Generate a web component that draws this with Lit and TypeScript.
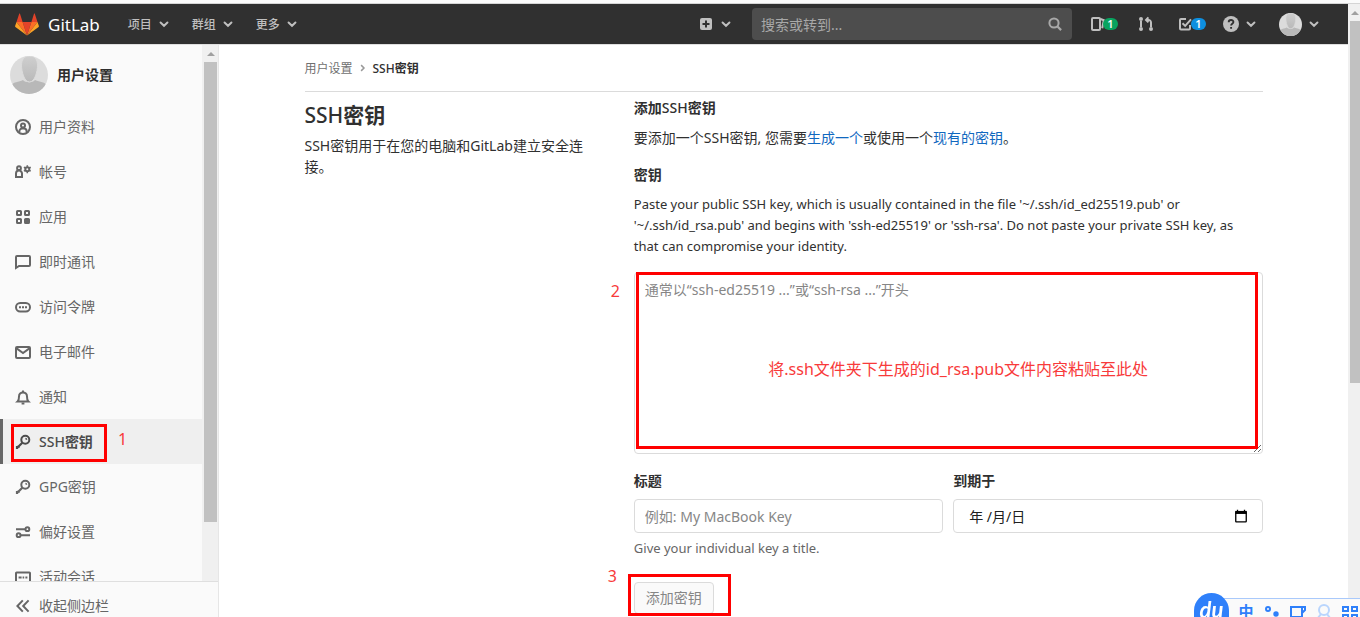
import { LitElement, html, css, svg, nothing } from "lit";
import { customElement, property, state } from "lit/decorators.js";
import { classMap } from "lit/directives/class-map.js";

const ICONS: Record<string, unknown> = {
  profile: svg`<circle cx="8" cy="8" r="7"/><circle cx="8" cy="6.6" r="2"/><path d="M4.4 13v-.8A2.6 2.6 0 0 1 7 9.6h2a2.6 2.6 0 0 1 2.6 2.6v.8"/>`,
  account: svg`<circle cx="4" cy="4.2" r="1.9"/><path d="M1 13V9.6a3 3 0 0 1 6 0V13z"/><circle cx="12.3" cy="5.2" r="2"/><path d="M12.3 1.2v1.6M12.3 7.6v1.6M8.9 3.2l1.4.8M14.3 6.4l1.4.8M8.9 7.2l1.4-.8M14.3 4l1.4-.8" stroke-width="1.5"/>`,
  apps: svg`<rect x="2" y="2" width="4" height="4" rx=".6"/><rect x="10" y="2" width="4" height="4" rx=".6"/><rect x="2" y="10" width="4" height="4" rx=".6"/><rect x="10" y="10" width="4" height="4" rx=".6" fill="currentColor"/>`,
  chat: svg`<path d="M1 14V3a1 1 0 0 1 1-1h12a1 1 0 0 1 1 1v8a1 1 0 0 1-1 1H4z"/>`,
  token: svg`<rect x="1" y="4" width="14" height="8.4" rx="4.2"/><path d="M4 8.2h2M7 8.2h2M10 8.2h2"/>`,
  mail: svg`<rect x="1" y="3" width="14" height="11" rx="1"/><path d="M1.6 4.4 8 9l6.4-4.6"/>`,
  bell: svg`<path d="M2.6 12.6c1.3-1.2 1.4-2.5 1.4-5.2a4 4 0 0 1 8 0c0 2.7.1 4 1.4 5.2z"/><path d="M8 1.4v2M6.6 14.4h2.8"/>`,
  key: svg`<circle cx="10.3" cy="5.7" r="4"/><path d="M7.3 8.7 2.3 13.7M2 12v3M3.7 11.3v2.5" stroke-width="2.2"/><path d="M10.4 4.5a1.3 1.3 0 0 1 1.2 1.2" stroke-width="1.5"/>`,
  prefs: svg`<path d="M1 5.2h9M6 11.2h9"/><circle cx="12.4" cy="5.2" r="1.9"/><circle cx="3.6" cy="11.2" r="1.9"/>`,
  session: svg`<rect x="1" y="3.4" width="14" height="10" rx=".6"/><path d="M3.6 8.4h3M7.6 8.4h1.6M10.4 8.4h2"/>`,
  collapse: svg`<path d="M7.8 2.4 2.4 8l5.4 5.6M13.6 2.4 8.2 8l5.4 5.6"/>`,
  chevron: svg`<path d="M3.4 6l4.6 4.4L12.600 6" stroke-width="2.600" stroke-linecap="round"/>`,
  angle: svg`<path d="M5.500 4.200 9.300 8l-3.800 3.800"/>`,
  plus: svg`<rect x="2" y="2" width="12" height="12" rx="2" fill="currentColor" stroke="none"/><path d="M8 4.5v7M4.5 8h7" stroke="#303030"/>`,
  search: svg`<circle cx="7" cy="7" r="4.6"/><path d="M10.5 10.5l3.6 3.6" stroke-width="2.2"/>`,
  issues: svg`<rect x="3" y="2" width="8" height="12" rx="1"/><path d="M11.500 3l3.300 1.200-1.600 8"/>`,
  merge: svg`<path d="M3 5v6M13 11V6.5a2.6 2.6 0 0 0-2.600-2.600H8.600M10.400 1.400 8 3.900l2.400 2.500"/><circle cx="3" cy="3" r="1" fill="currentColor"/><circle cx="3" cy="13" r="1" fill="currentColor"/><circle cx="13" cy="13" r="1" fill="currentColor"/>`,
  todo: svg`<path d="M9 3H4a1 1 0 0 0-1 1v8.500a1 1 0 0 0 1 1h8a1 1 0 0 0 1-1V9"/><path d="M5.500 7.200l2.700 2.700L14 3.400"/>`,
  help: svg`<circle cx="8" cy="8" r="8" fill="currentColor" stroke="none"/><path d="M5.7 6.300c0-3 4.700-2.900 4.700-.2 0 1.700-2.300 1.600-2.300 3.300M8.100 11v1.700" stroke="#303030" stroke-width="1.900"/>`,
  calendar: svg`<path d="M2 4.5h12V14a.7.7 0 0 1-.7.7H2.700A.7.7 0 0 1 2 14z" stroke-width="1.500"/><path d="M1.300 2.200h13.400v3.400H1.300z" fill="currentColor" stroke="none"/><path d="M4 .8v2M12 .8v2" stroke-width="1.500"/>`,
};

@customElement("gl-icon")
class GlIcon extends LitElement {
  @property() name = "";
  @property({ type: Number }) size = 16;
  static styles = css`
    :host { display: inline-flex; flex: none; }
    svg { display: block; fill: none; stroke: currentColor; stroke-width: 2; }
  `;
  render() {
    return html`<svg width=${this.size} height=${this.size} viewBox="0 0 16 16" aria-hidden="true">${ICONS[this.name]}</svg>`;
  }
}

@customElement("gl-avatar")
class GlAvatar extends LitElement {
  @property({ type: Number }) size = 38;
  static styles = css`
    :host { display: inline-flex; flex: none; border-radius: 50%; overflow: hidden; }
    svg { display: block; }
  `;
  render() {
    return html`<svg width=${this.size} height=${this.size} viewBox="0 0 38 38" aria-hidden="true">
      <defs>
        <linearGradient id="h" x1="0" y1="0" x2="0" y2="1"><stop offset="0" stop-color="#cfcfcf"/><stop offset="1" stop-color="#b9b9b9"/></linearGradient>
      </defs>
      <rect width="38" height="38" fill="#dcdcdc"/>
      <path d="M0 38v-8c3-4 9-4 13-6 2 3 10 3 12 0 5 2 10 2 13 6v8z" fill="#b8b8b8"/>
      <path d="M19.500 0c6 0 8 4 8 9.500S25 26 19.500 26 11.500 15 11.500 9.500 13.500 0 19.500 0z" fill="url(#h)" stroke="#dcdcdc" stroke-width="1"/>
    </svg>`;
  }
}

@customElement("gl-scrollbar")
class GlScrollbar extends LitElement {
  static styles = css`
    :host { display: flex; flex-direction: column; background: #f0f0f0; box-sizing: border-box; }
    .arrow { height: 17px; display: grid; place-items: center; }
    .arrow svg { display: block; }
    .thumb { background: #c1c1c1; height: var(--thumb, 50%); }
  `;
  render() {
    return html`<div class="arrow"><svg width="8" height="4" viewBox="0 0 8 4"><path d="M0 4l4-4 4 4z" fill="#a0a0a0"/></svg></div><div class="thumb"></div>`;
  }
}

@customElement("gl-header")
class GlHeader extends LitElement {
  static styles = css`
    :host { display: flex; align-items: center; height: 41px; flex: none; background: #303030; color: #bfbfbf; padding: 0 28px 0 15px; border-bottom: 1px solid #dfdfdf; font-size: 12px; box-sizing: border-box; }
    a, button { color: inherit; text-decoration: none; background: none; border: 0; padding: 0; font: inherit; display: flex; align-items: center; }
    .brand { color: #fff; font-size: 17px; gap: 9px; margin-right: 28px; }
    .brand svg { display: block; }
    .menu, .new, .help, .user { gap: 6px; }
    .menu { font-weight: 500; margin-right: 22px; }
    .spacer { flex: 1; }
    .new { margin-right: 20px; }
    .search { display: flex; align-items: center; width: 320px; height: 32px; box-sizing: border-box; border-radius: 4px; background: #4d4d4d; padding: 0 9px; margin-right: 17px; color: #a8a8a8; }
    .search input { flex: 1; min-width: 0; border: 0; padding: 0; background: none; outline: 0; color: #fff; font: inherit; font-size: 14px; }
    .search input::placeholder { color: #a8a8a8; opacity: 1; }
    .count { position: relative; margin-right: 33px; }
    .badge { position: absolute; left: 14px; top: 2px; width: 15px; height: 12px; border-radius: 6px; text-align: center; color: #fff; font-size: 11px; line-height: 12px; font-weight: 600; }
    .green { background: #08a35f; }
    .blue { background: #0d8fe0; }
    .merge { margin-right: 23px; }
    .todo { margin-right: 30px; }
    .help { margin-right: 22px; }
  `;
  render() {
    return html`
      <a class="brand" href="#">
        <svg width="24" height="23" viewBox="0 0 24 23" aria-hidden="true">
          <path d="M12 22.5 16.4 9H7.6z" fill="#e24329"/>
          <path d="M12 22.5 7.6 9H1.5zM12 22.5 16.4 9h6.1z" fill="#fc6d26"/>
          <path d="M1.500 9 .1 13c-.1.4 0 .8.3 1L12 22.500zM22.500 9l1.400 4c.1.4 0 .8-.3 1L12 22.500z" fill="#fca326"/>
          <path d="M1.500 9h6.100L5 .8c-.1-.4-.7-.4-.8 0zM22.500 9h-6.100L19 .8c.1-.4.7-.4.8 0z" fill="#e24329"/>
        </svg>
        GitLab
      </a>
      ${["项目", "群组", "更多"].map((t) => html`<button class="menu">${t}<gl-icon name="chevron" size="12"></gl-icon></button>`)}
      <div class="spacer"></div>
      <button class="new" aria-label="新建"><gl-icon name="plus" size="16"></gl-icon><gl-icon name="chevron" size="12"></gl-icon></button>
      <label class="search"><input type="text" aria-label="搜索或转到" placeholder="搜索或转到..." /><gl-icon name="search"></gl-icon></label>
      <a class="count" href="#" aria-label="议题"><gl-icon name="issues"></gl-icon><span class="badge green">1</span></a>
      <a class="merge" href="#" aria-label="合并请求"><gl-icon name="merge"></gl-icon></a>
      <a class="count todo" href="#" aria-label="待办事项"><gl-icon name="todo"></gl-icon><span class="badge blue">1</span></a>
      <button class="help" aria-label="帮助"><gl-icon name="help"></gl-icon><gl-icon name="chevron" size="12"></gl-icon></button>
      <button class="user" aria-label="用户"><gl-avatar size="23"></gl-avatar><gl-icon name="chevron" size="12"></gl-icon></button>
    `;
  }
}

const NAV = [
  ["profile", "", "用户资料"],
  ["account", "", "帐号"],
  ["apps", "", "应用"],
  ["chat", "", "即时通讯"],
  ["token", "", "访问令牌"],
  ["mail", "", "电子邮件"],
  ["bell", "", "通知"],
  ["key", "SSH", "密钥"],
  ["key", "", "GPG密钥"],
  ["prefs", "", "偏好设置"],
  ["session", "", "活动会话"],
];

@customElement("gl-sidebar")
class GlSidebar extends LitElement {
  static styles = css`
    :host { display: flex; flex-direction: column; width: 219px; flex: none; background: #fafafa; border-right: 1px solid #e6e6e6; box-sizing: border-box; color: #666; font-size: 14px; min-height: 0; }
    .scroll { flex: 1; min-height: 0; display: flex; }
    .list { flex: 1; min-width: 0; overflow: hidden; }
    gl-scrollbar { width: 16px; padding: 0 1px 0 2px; --thumb: 460px; }
    .title { display: flex; align-items: center; gap: 9px; height: 59px; padding-left: 10px; color: #2e2e2e; font-weight: 600; }
    .list a { display: flex; align-items: center; gap: 8px; height: 45px; padding-left: 15px; color: inherit; text-decoration: none; }
    .list a.active { position: relative; background: #efefef; box-shadow: inset 3px 0 0 #666; color: #4b4b4b; font-weight: 600; }
    .text { padding-bottom: 2px; }
    .latin { font-weight: 500; }
    .mark { position: absolute; left: 11px; top: 5px; width: 96px; height: 38px; box-sizing: border-box; border: 3px solid #f00; }
    .num { position: absolute; left: 118px; top: 8px; color: #f83a3a; font-size: 16px; font-weight: 400; line-height: 24px; }
    .collapse { display: flex; align-items: center; gap: 8px; height: 36px; padding: 12px 0 0 15px; box-sizing: border-box; border: 0; border-top: 1px solid #dfdfdf; background: none; color: inherit; font: inherit; }
  `;
  render() {
    return html`
      <div class="scroll">
        <nav class="list">
          <div class="title"><gl-avatar size="38"></gl-avatar><span class="text">用户设置</span></div>
          ${NAV.map(([icon, latin, text], i) => {
            const active = i === 7;
            return html`<a href="#" class=${classMap({ active })}>
              <gl-icon name=${icon}></gl-icon><span class="text">${latin ? html`<span class="latin">${latin}</span>` : nothing}${text}</span>
              ${active ? html`<span class="mark"></span><span class="num">1</span>` : nothing}
            </a>`;
          })}
        </nav>
        <gl-scrollbar></gl-scrollbar>
      </div>
      <button class="collapse"><gl-icon name="collapse"></gl-icon><span class="text">收起侧边栏</span></button>
    `;
  }
}

@customElement("ssh-key-page")
class SshKeyPage extends LitElement {
  @state() key = "";
  static styles = css`
    :host { display: block; flex: 1; min-width: 0; color: #303030; font-size: 14px; line-height: 21px; }
    .container { max-width: 990px; margin: 0 auto; padding: 0 16px; box-sizing: border-box; }
    .crumbs { display: flex; align-items: center; gap: 4px; height: 47px; border-bottom: 1px solid #dbdbdb; box-sizing: border-box; font-size: 12px; color: #303030; font-weight: 600; }
    .crumbs a { color: #707070; text-decoration: none; font-weight: 400; }
    .crumbs gl-icon { color: #999; }
    .latin { font-weight: 500; }
    .row { display: grid; grid-template-columns: 1fr 2fr; margin: 0 -15px; }
    .col { padding: 0 15px; min-width: 0; }
    h4 { margin: 11px 0 8px; font-size: 21px; line-height: 24px; font-weight: 600; }
    h5 { margin: 5px 0 9px; font-size: 14px; line-height: 21px; font-weight: 600; }
    p { margin: 0; }
    .intro { margin-bottom: 16px; }
    .intro a { color: #1068bf; text-decoration: none; }
    label { display: block; font-weight: 600; margin-bottom: 8px; }
    .hint { font-size: 13px; padding: 1px 12px 0 0; margin-bottom: 15px; }
    .field { position: relative; margin-bottom: 16px; }
    textarea, .name, .date { display: block; width: 100%; box-sizing: border-box; border: 1px solid #dbdbdb; border-radius: 4px; background: #fff; font: inherit; color: #303030; padding: 6px 10px; outline: 0; }
    textarea { height: 182px; line-height: 21px; }
    textarea::placeholder, .name::placeholder { color: #868686; opacity: 1; }
    .pair { display: grid; grid-template-columns: 1fr 1fr; gap: 10px; margin-bottom: 5px; }
    .name, .date { height: 34px; }
    .date { display: flex; align-items: center; padding: 0 14px 0 15px; }
    .date input { flex: 1; min-width: 0; border: 0; padding: 0; background: none; font: inherit; outline: 0; }
    .date input::placeholder { color: #202020; opacity: 1; }
    .date button { border: 0; padding: 0; background: none; color: #000; display: flex; }
    .help { font-size: 13px; color: #666; margin-bottom: 23px; }
    .submit { position: relative; display: inline-block; }
    .add { display: block; height: 32px; padding: 0 11px 2px; border: 1px solid #dbdbdb; border-radius: 4px; background: #fafafa; color: #868686; font: inherit; }
    .mark { position: absolute; box-sizing: border-box; border: 3px solid #f00; pointer-events: none; }
    .over-key { left: 2px; right: 5px; top: 0; bottom: 5px; }
    .over-add { left: -6px; right: -17px; top: -8px; bottom: -2px; }
    .note { position: absolute; color: #f83a3a; font-size: 16px; line-height: 24px; white-space: nowrap; }
    .note-key { left: 0; right: 0; top: 85px; text-align: center; padding-left: 20px; pointer-events: none; }
    .num-key { left: -23px; top: 7px; }
    .num-add { left: -26px; top: -18px; }
  `;
  render() {
    return html`
      <div class="container">
        <nav class="crumbs"><a href="#">用户设置</a><gl-icon name="angle" size="12"></gl-icon><span><span class="latin">SSH</span>密钥</span></nav>
        <div class="row">
          <section class="col">
            <h4><span class="latin">SSH</span>密钥</h4>
            <p>SSH密钥用于在您的电脑和GitLab建立安全连接。</p>
          </section>
          <section class="col">
            <h5>添加<span class="latin">SSH</span>密钥</h5>
            <p class="intro">要添加一个SSH密钥, 您需要<a href="#">生成一个</a>或使用一个<a href="#">现有的密钥</a>。</p>
            <label for="key">密钥</label>
            <p class="hint">Paste your public SSH key, which is usually contained in the file '~/.ssh/id_ed25519.pub' or '~/.ssh/id_rsa.pub' and begins with 'ssh-ed25519' or 'ssh-rsa'. Do not paste your private SSH key, as that can compromise your identity.</p>
            <div class="field">
              <textarea id="key" placeholder="通常以“ssh-ed25519 ...”或“ssh-rsa ...”开头" .value=${this.key} @input=${(e: Event) => (this.key = (e.target as HTMLTextAreaElement).value)}></textarea>
              <span class="mark over-key"></span>
              <span class="note num-key">2</span>
              <span class="note note-key">将.ssh文件夹下生成的id_rsa.pub文件内容粘贴至此处</span>
            </div>
            <div class="pair">
              <div><label for="title">标题</label><input class="name" id="title" type="text" placeholder="例如: My MacBook Key" /></div>
              <div><label for="expires">到期于</label><div class="date"><input id="expires" type="text" placeholder="年 /月/日" /><button aria-label="选择日期"><gl-icon name="calendar" size="14"></gl-icon></button></div></div>
            </div>
            <p class="help">Give your individual key a title.</p>
            <div class="submit">
              <button class="add" ?disabled=${!this.key}>添加密钥</button>
              <span class="mark over-add"></span>
              <span class="note num-add">3</span>
            </div>
          </section>
        </div>
      </div>
    `;
  }
}

@customElement("ime-bar")
class ImeBar extends LitElement {
  static styles = css`
    :host { position: fixed; right: 0; bottom: 0; display: flex; align-items: flex-end; height: 24px; overflow: hidden; color: #2f80fa; }
    .logo { position: relative; z-index: 1; width: 35px; height: 24px; border-radius: 18px 18px 0 0; background: #2f80fa; color: #fff; font: italic 700 22px/34px "Lato", sans-serif; text-align: center; box-sizing: border-box; }
    .tools { display: flex; align-items: flex-start; gap: 10px; height: 19px; box-sizing: border-box; border-top: 1px solid #a9c9fb; background: #fafafa; margin-left: -18px; padding: 5px 2px 0 27px; }
    svg { display: block; fill: none; stroke: currentColor; stroke-width: 2; }
    .pale { color: #b9d5fd; }
    .zh { width: 16px; font-size: 15px; line-height: 14px; font-weight: 700; text-align: center; }
  `;
  render() {
    return html`
      <div class="logo">du</div>
      <div class="tools">
        <span class="zh">中</span>
        <svg width="16" height="16"><circle cx="4" cy="5" r="2"/><circle cx="12" cy="10" r="1.7" fill="currentColor"/></svg>
        <svg width="16" height="16"><path d="M1 3h11v10H1zM12 3h3v3l-3 3"/></svg>
        <svg class="pale" width="16" height="16"><circle cx="8" cy="6" r="5"/><path d="M5 10 2 14M11 10l3 4"/></svg>
        <svg width="16" height="16"><path d="M1 3h5v4H1zM10 3h5v4h-5zM1 11h5v4H1zM10 11h5v4h-5z"/></svg>
      </div>
    `;
  }
}

@customElement("app-root")
class AppRoot extends LitElement {
  static styles = css`
    :host { display: flex; flex-direction: column; height: 100vh; overflow: hidden; box-sizing: border-box; background: #fff; font-family: "Noto Sans", "Noto Sans CJK SC", sans-serif; }
    .edge { height: 4px; flex: none; box-sizing: border-box; border-bottom: 1px solid #d5d5d5; background: #fbfbfb; }
    .window { flex: 1; min-height: 0; display: flex; }
    .page { flex: 1; min-width: 0; display: flex; flex-direction: column; }
    .body { flex: 1; min-height: 0; display: flex; }
    gl-scrollbar { width: 12px; padding-left: 2px; --thumb: 362px; }
  `;
  render() {
    return html`
      <div class="edge"></div>
      <div class="window">
        <div class="page">
          <gl-header></gl-header>
          <div class="body"><gl-sidebar></gl-sidebar><ssh-key-page></ssh-key-page></div>
        </div>
        <gl-scrollbar></gl-scrollbar>
      </div>
      <ime-bar></ime-bar>
    `;
  }
}
